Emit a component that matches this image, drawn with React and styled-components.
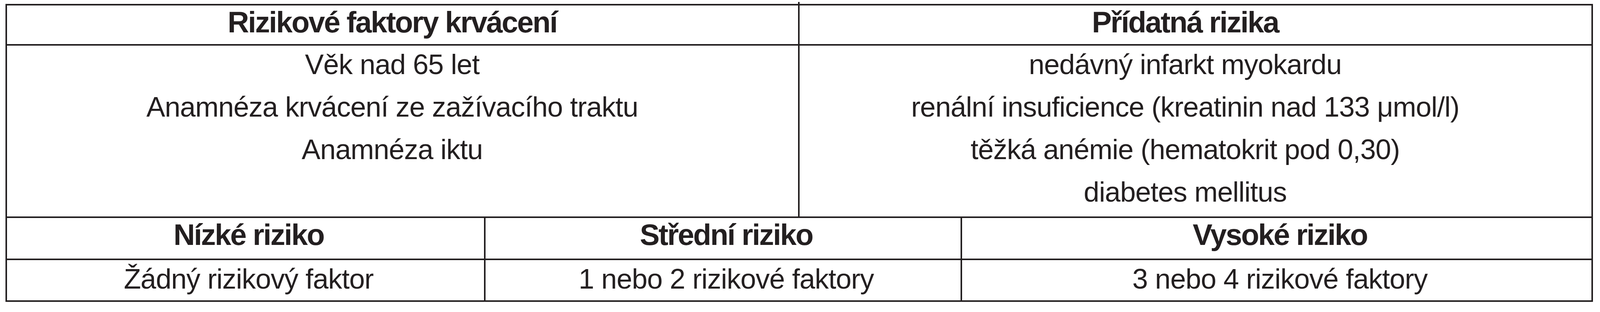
import styled, { createGlobalStyle, css } from "styled-components";

const INK = "#231f20";

const GlobalStyle = createGlobalStyle`
  html, body {
    margin: 0;
    padding: 0;
    background: #ffffff;
  }

  body {
    font-family: "Liberation Sans", Arial, sans-serif;
    color: ${INK};
  }
`;

const Table = styled.div`
  box-sizing: border-box;
  width: 4064px;
  margin: 10px 0 0 14px;
  border: 4px solid ${INK};
`;

const Section = styled.div`
  display: grid;
  grid-template-columns: ${(p) => p.$cols};
`;

// the printed table's rules poke a few px past the outer frame
const stub = {
  top: css`
    &::after {
      content: "";
      position: absolute;
      top: -9px;
      right: -4px;
      width: 4px;
      height: 9px;
      background: ${INK};
    }
  `,
  bottom: css`
    &::after {
      content: "";
      position: absolute;
      bottom: -10px;
      right: -4px;
      width: 4px;
      height: 10px;
      background: ${INK};
    }
  `,
};

const Cell = styled.div`
  position: relative;
  box-sizing: border-box;
  height: ${(p) => p.$height}px;
  padding: ${(p) => p.$pad || 0}px ${(p) => p.$padR || 0}px 0
    ${(p) => p.$padL || 0}px;
  border-right: ${(p) => (p.$divider ? `4px solid ${INK}` : "none")};
  border-bottom: ${(p) => (p.$rule ? `4px solid ${INK}` : "none")};
  text-align: center;
  white-space: nowrap;
  ${(p) => p.$stub && stub[p.$stub]}
`;

const HeadText = styled.div`
  font-size: 76px;
  line-height: 76px;
  font-weight: 700;
  letter-spacing: -2.8px;
`;

const BodyText = styled.div`
  font-size: 72px;
  line-height: 72px;
  letter-spacing: -1px;
`;

const Lines = styled.div`
  display: flex;
  flex-direction: column;
  margin-top: -6px;
  font-size: 72px;
  line-height: 109px;
  letter-spacing: -1px;
`;

const factors = [
  "Věk nad 65 let",
  "Anamnéza krvácení ze zažívacího traktu",
  "Anamnéza iktu",
];

const extraRisks = [
  "nedávný infarkt myokardu",
  "renální insuficience (kreatinin nad 133 μmol/l)",
  "těžká anémie (hematokrit pod 0,30)",
  "diabetes mellitus",
];

const levels = [
  { name: "Nízké riziko", count: "Žádný rizikový faktor" },
  { name: "Střední riziko", count: "1 nebo 2 rizikové faktory" },
  { name: "Vysoké riziko", count: "3 nebo 4 rizikové faktory" },
];

function App() {
  return (
    <>
      <GlobalStyle />
      <Table>
        <Section $cols="2029px 1fr">
          <Cell $height={103} $pad={5} $padR={53} $divider $rule $stub="top">
            <HeadText>Rizikové faktory krvácení</HeadText>
          </Cell>
          <Cell $height={103} $pad={5} $padR={53} $rule>
            <HeadText>Přídatná rizika</HeadText>
          </Cell>

          <Cell $height={442} $padR={53} $divider $rule>
            <Lines>
              {factors.map((f) => (
                <span key={f}>{f}</span>
              ))}
            </Lines>
          </Cell>
          <Cell $height={442} $padR={53} $rule>
            <Lines>
              {extraRisks.map((r) => (
                <span key={r}>{r}</span>
              ))}
            </Lines>
          </Cell>
        </Section>

        <Section $cols="1225px 1220px 1fr">
          {levels.map((l, i) => (
            <Cell
              key={l.name}
              $height={108}
              $pad={5}
              $padL={16}
              $divider={i < 2}
              $rule
            >
              <HeadText>{l.name}</HeadText>
            </Cell>
          ))}
          {levels.map((l, i) => (
            <Cell
              key={l.count}
              $height={103}
              $pad={12}
              $padL={16}
              $divider={i < 2}
              $stub={i < 2 ? "bottom" : undefined}
            >
              <BodyText>{l.count}</BodyText>
            </Cell>
          ))}
        </Section>
      </Table>
    </>
  );
}

export default App;
